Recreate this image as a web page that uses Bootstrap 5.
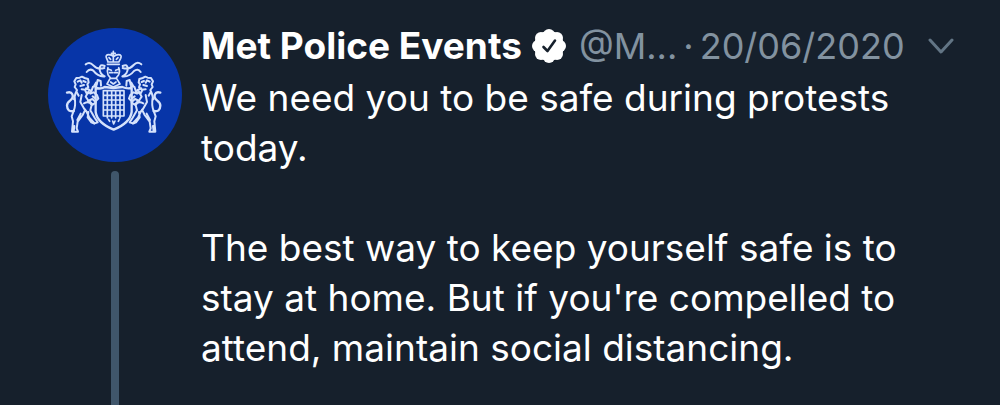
<!DOCTYPE html>
<html lang="en">
<head>
<meta charset="utf-8">
<meta name="viewport" content="width=device-width, initial-scale=1">
<title>Met Police Events</title>
<link href="https://cdn.jsdelivr.net/npm/bootstrap@5.3.0/dist/css/bootstrap.min.css" rel="stylesheet">
<style>
body { background: #16202c; color: #fff; font-family: Inter, "Liberation Sans", sans-serif; font-size: 37px; line-height: 50px; }
.tweet { padding: 21px 45px 0 48px; gap: 19px; }
.avatar-rail { width: 134px; padding-top: 7px; gap: 9px; }
.avatar { width: 134px; height: 134px; }
.thread-line { width: 8px; background: #40566b; border-radius: 4px 4px 0 0; }
.author { color: #fff; font-weight: 700; }
.muted, .muted:hover { color: #8292a0; font-size: 36px; }
.seal { width: 34px; height: 34px; margin: 0 13px 0 10px; }
.separator { margin: 0 6px; }
.caret { width: 28px; height: 50px; color: #627585; }
.tweet-text { margin-top: 2px; }
.tweet-text p { margin-bottom: 50px; }
</style>
</head>
<body>
<article class="tweet d-flex min-vh-100">
  <div class="avatar-rail d-flex flex-column align-items-center flex-shrink-0">
    <svg class="avatar flex-shrink-0" viewBox="24 25 402 402" role="img" aria-label="Met Police crest">
      <circle cx="225" cy="226" r="201" fill="#0735a8"/>
      <g fill="none" stroke="#d5e2fc" stroke-width="5" stroke-linecap="round" stroke-linejoin="round">
        <!-- crown -->
        <path d="M202 134h36M203 127h34M204 126l-5-12q-3-9 7-9 9 0 15 6 6-6 14-6 12 0 7 11l-5 10M220 111v14M214 101h12M220 95v14M207 114l5 5M234 114l-5 5"/>
        <!-- helmet -->
        <path d="M204 144q-4 10 0 21l8 11h16l8-11q5-10 0-21M206 149l8 3M235 149l-8 3M209 159h9M223 159h9M210 177l-9 16 19 9 20-9-10-16M212 187l8 6 8-6"/>
        <!-- mantling -->
        <path stroke-width="6" d="M137 134q12-9 23 3 12 14 33 8M140 157q9-12 20-4 14 19 34 17M194 170q-15-8-15-22 0-17 15-9M304 134q-12-10-23 2-13 15-33 9M302 157q-9-12-20-3-14 18-34 16M247 170q16-8 16-22 0-17-15-9"/>
        <!-- shield and portcullis -->
        <path stroke-width="7" d="M167 205q17 4 27-3l26 3 27-3q13 6 28 3v72q-4 32-54 53-50-21-54-53z"/>
        <path d="M190 213h62v76h-62zM202 213v82M215 213v82M227 213v82M240 213v82M190 227h62M190 241h62M190 256h62M190 271h62M205 299l4 6M218 304l3 9 4-9M235 305l3-6"/>
        <!-- supporting lions -->
        <g id="lion" stroke-width="6">
          <path d="M107 194l-4-9 6-10 10-1 7-3 8 4 10 3 2 10-4 6 3 9-9 7-11-1M113 186l8-4 4 7M130 184l7 3M121 199l11-3M107 194l-3 8 7 9-5 12-4 16M135 211l6 12 13-8 5-14 10-1M151 222l10-4 10 8 4 11-9 9-9-8-13 6M145 216l-8 15 9 13M170 196l3-15 9 3 1 14M162 200l6-11M138 206l11 5M158 230l8 6"/>
          <path stroke-width="7" d="M101 274q-19 4-20-16 0-9 9-15 12-9 7-19-4-9-16-5"/>
          <path d="M104 235q4 22-3 39l-6 16 4 15-3 31h18l-4-10 3-20 15-20 8-16M125 226l-4 21 12 21M132 251q16-8 23 5l-4 16 13 22 9 14-9 3-16-17-10-21M122 282l-10 19M145 277l-2 16 11 15 9 4M111 219l5 9M119 292l-6 13M103 319l-2 15M149 245l9 10 9-6"/>
        </g>
        <use href="#lion" transform="matrix(-1 0 0 1 442 0)"/>
      </g>
    </svg>
    <div class="thread-line flex-grow-1"></div>
  </div>
  <div class="flex-grow-1">
    <header class="d-flex align-items-center text-nowrap">
      <a class="author text-decoration-none" href="#">Met Police Events</a>
      <svg class="seal flex-shrink-0" viewBox="0 0 34 34" role="img" aria-label="Verified account">
        <g fill="#fff"><circle cx="17" cy="17" r="15"/><circle cx="17" cy="6" r="6"/><circle cx="25" cy="9" r="6"/><circle cx="28" cy="17" r="6"/><circle cx="25" cy="25" r="6"/><circle cx="17" cy="28" r="6"/><circle cx="9" cy="25" r="6"/><circle cx="6" cy="17" r="6"/><circle cx="9" cy="9" r="6"/></g>
        <path d="M11.500 18l4 4 7.500-10.500" fill="none" stroke="#16202c" stroke-width="2.600" stroke-linecap="round" stroke-linejoin="round"/>
      </svg>
      <a class="muted text-decoration-none" href="#">@M...</a>
      <span class="muted separator">·</span>
      <time class="muted" datetime="2020-06-20">20/06/2020</time>
      <button class="caret btn p-0 border-0 ms-auto d-flex align-items-center" type="button" aria-label="More options">
        <svg width="28" height="16" viewBox="0 0 28 16" fill="none" stroke="currentColor" stroke-width="3" stroke-linecap="round" stroke-linejoin="round"><path d="M3 2l11 12L25 2"/></svg>
      </button>
    </header>
    <div class="tweet-text">
      <p>We need you to be safe during protests today.</p>
      <p class="mb-0">The best way to keep yourself safe is to stay at home. But if you're compelled to attend, maintain social distancing.</p>
    </div>
  </div>
</article>
<script src="https://cdn.jsdelivr.net/npm/bootstrap@5.3.0/dist/js/bootstrap.bundle.min.js"></script>
</body>
</html>
